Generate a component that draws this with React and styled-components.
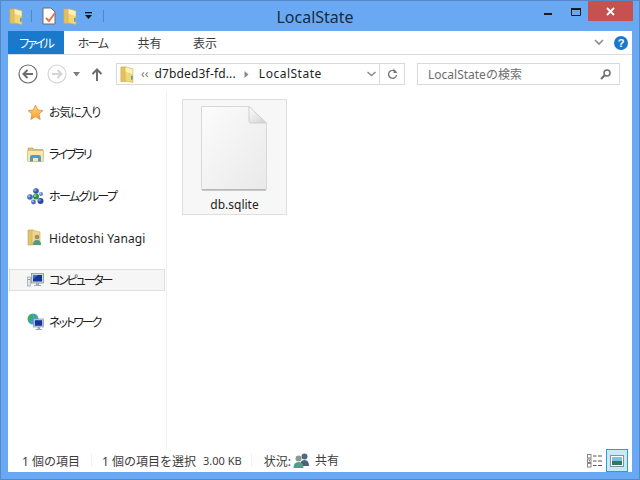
import React from 'react';
import styled, { createGlobalStyle } from 'styled-components';

const Global = createGlobalStyle`
  html, body { margin: 0; padding: 0; width: 640px; height: 480px; overflow: hidden; background: #69a9f4; }
  * { box-sizing: border-box; }
`;
const FONT = `"Noto Sans", "Noto Sans CJK JP", sans-serif`;

const Win = styled.div`
  width: 640px; height: 480px; display: flex; flex-direction: column;
  background: #69a9f4; border: 1px solid #5588c4; font-family: ${FONT}; color: #1e1e1e;
  font-size: 12px; position: relative;
`;
const TitleBar = styled.div`
  height: 30px; display: grid; grid-template-columns: 1fr auto 1fr; align-items: start; flex: none;
`;
const Qat = styled.div`
  display: flex; align-items: center; height: 30px; padding: 0 0 0 8px;
`;
const QatSep = styled.span`
  width: 1px; height: 12px; background: #4f86c4; margin: ${p => p.$m};
`;
const Title = styled.div`
  font-size: 16px; line-height: 30px; color: #1d2a3c; margin-top: 1px; padding-right: 10px;
`;
const Controls = styled.div`
  display: flex; justify-content: flex-end; align-items: flex-start; padding-right: 6px;
`;
const CtlBtn = styled.div`
  width: ${p => p.$w}px; height: 20px; display: flex; align-items: center; justify-content: center;
  background: ${p => p.$bg || 'transparent'};
`;
const Body = styled.div`
  flex: 1; margin: 0 7px 7px; background: #fff; display: flex; flex-direction: column; min-height: 0;
`;
const Tabs = styled.div`
  height: 24px; flex: none; display: flex; align-items: stretch; border-bottom: 1px solid #dadbdc; position: relative;
`;
const Tab = styled.div`
  width: ${p => p.$w}px; display: flex; align-items: center; justify-content: center; font-size: 12px;
  font-feature-settings: "palt"; letter-spacing: ${p => p.$ls || 0}px;
  height: 23px; background: ${p => p.$active ? '#1979ca' : 'transparent'}; color: ${p => p.$active ? '#fff' : '#3b3b3b'};
`;
const TabRight = styled.div`
  margin-left: auto; display: flex; align-items: center; gap: 10px; padding-right: 4px; height: 23px;
`;
const NavRow = styled.div`
  height: 37px; flex: none; display: flex; align-items: flex-start; padding-top: 8px;
`;
const NavIcons = styled.div`
  width: 108px; flex: none; height: 22px; display: flex; align-items: center; padding-left: 10px;
`;
const Box = styled.div`
  height: 22px; border: 1px solid #d9d9d9; display: flex; align-items: center; background: #fff;
`;
const AddressBox = styled(Box)`
  width: 289px; flex: none; padding-left: 3px;
`;
const Crumb = styled.span`
  font-size: ${p => p.$fs || 12}px; color: ${p => p.$c || '#1e1e1e'}; line-height: 20px; white-space: nowrap;
  letter-spacing: ${p => p.$ls || 0}px; margin-left: ${p => p.$ml || 0}px;
`;
const AddrEnd = styled.div`
  margin-left: auto; display: flex; align-items: center; height: 20px;
`;
const Refresh = styled.div`
  width: 25px; height: 20px; border-left: 1px solid #d9d9d9; display: flex; align-items: center; justify-content: center;
`;
const SearchBox = styled(Box)`
  width: 203px; flex: none; margin-left: 12px; padding: 0 8px 0 10px; justify-content: space-between;
  color: #6d6d6d; font-size: 12px;
`;
const Main = styled.div`
  flex: 1; display: flex; min-height: 0;
`;
const Side = styled.div`
  width: 159px; flex: none; border-right: 1px solid #f0f0f0; padding: 9px 0 0 1px; display: flex; flex-direction: column;
`;
const SideItem = styled.div`
  height: 22px; width: 156px; margin-bottom: 20px; display: flex; align-items: center; padding-left: 18px;
  font-size: 12px; white-space: nowrap; color: #1e1e1e; font-feature-settings: "palt";
  ${p => p.$sel && 'background:#f6f6f6; outline: 1px solid #dedede; outline-offset: -1px;'}
`;
const IconSlot = styled.span`
  width: 22px; flex: none; display: flex; align-items: center;
`;
const SideLabel = styled.span`
  letter-spacing: ${p => p.$ls || 0}px;
`;
const Content = styled.div`
  flex: 1; padding: 7px 0 0 15px;
`;
const FileTile = styled.div`
  width: 105px; height: 116px; background: #f7f7f7; border: 1px solid #dedede; display: flex; flex-direction: column; align-items: center;
`;
const FileName = styled.div`
  font-size: 12px; line-height: 16px; margin-top: 6px; color: #1e1e1e; font-family: ${FONT};
`;
const Status = styled.div`
  height: 23px; flex: none; display: flex; align-items: center; padding-left: 14px; font-size: 12px; color: #3c3c3c; white-space: nowrap;
`;
const StSep = styled.span`
  width: 1px; height: 13px; background: #f0f0f0; margin: ${p => p.$m};
`;
const StatusRight = styled.div`
  margin-left: auto; display: flex; align-items: center; height: 23px; padding-right: 4px;
`;
const ViewBtn = styled.div`
  width: 22px; height: 23px; display: flex; align-items: center; justify-content: center;
  ${p => p.$on && 'background:#cbe8f6; border: 1px solid #26a0da;'}
`;
const Gap = styled.span`
  width: ${p => p.$w}px; flex: none;
`;

const Folder = ({ w = 14, h = 17 }) => (
  <svg width={w} height={h} viewBox="0 0 14 18">
    <path d="M.5 1h5.500v15.500H.5z" fill="#e4c15e" stroke="#c9a64a" strokeWidth=".6" />
    <path d="M5 .7l8.300 2.300v14.500L5 15.800z" fill="#f3d777" stroke="#cfae55" strokeWidth=".6" />
    <path d="M5.500 1.300L12.800 3.400v5L5.500 6z" fill="#fcf0bd" />
    <rect x="11.300" y="10.500" width="1.700" height="4" fill="#3f9fd8" />
  </svg>
);
const Star = () => (
  <svg width="17" height="17" viewBox="0 0 17 17">
    <defs><linearGradient id="st" x1="0" y1="0" x2="0" y2="1"><stop offset="0" stopColor="#ffdf78" /><stop offset="1" stopColor="#f59c30" /></linearGradient></defs>
    <path d="M8.500 1l2.200 5 5.300.5-4 3.500 1.200 5.400-4.700-2.800-4.700 2.800 1.200-5.400-4-3.500 5.300-.5z" fill="url(#st)" stroke="#e08a3c" strokeWidth=".8" />
  </svg>
);
const Lib = () => (
  <svg width="17" height="15" viewBox="0 0 17 15">
    <path d="M1 1h5l1 1.500h9v2H1z" fill="#d9c27a" stroke="#a9a05a" strokeWidth=".6" />
    <rect x=".5" y="3.500" width="16" height="11" rx="1" fill="#f8e7a8" stroke="#c9b26a" strokeWidth=".7" />
    <path d="M3 14.500V10q0-2 2-2h7q2 0 2 2v4.500h-3V11H6v3.500z" fill="#4a9ccf" />
  </svg>
);
const Ball = ({ cx, cy, r, c, h }) => (
  <>
    <circle cx={cx} cy={cy} r={r} fill={c} />
    <circle cx={cx - r * 0.3} cy={cy - r * 0.3} r={r * 0.45} fill={h} />
  </>
);
const Group = () => (
  <svg width="17" height="17" viewBox="0 0 17 17">
    <Ball cx={9} cy={3} r={2.800} c="#3558ad" h="#7f9be0" />
    <Ball cx={3} cy={9} r={2.800} c="#3f66bb" h="#90acea" />
    <Ball cx={14} cy={6} r={2} c="#5f84d0" h="#b5c8f0" />
    <Ball cx={9} cy={8.500} r={3} c="#2a9140" h="#7fd08a" />
    <Ball cx={13.500} cy={13} r={3} c="#2a48a0" h="#7590d8" />
    <Ball cx={6.500} cy={14} r={2.400} c="#4a6fc4" h="#a0b8ec" />
  </svg>
);
const UserFolder = () => (
  <svg width="15" height="18" viewBox="0 0 15 18">
    <path d="M1 1h5v15H1z" fill="#e3c46c" stroke="#bfa050" strokeWidth=".6" />
    <path d="M5 1l8 2v13l-8-1z" fill="#ecd68c" stroke="#c7ac5c" strokeWidth=".6" />
    <circle cx="10" cy="8" r="2.300" fill="#a58a70" />
    <path d="M6 16q0-5 4-5t4 5z" fill="#4f9a80" />
  </svg>
);
const Computer = () => (
  <svg width="17" height="16" viewBox="0 0 17 16">
    <rect x=".5" y="5" width="3" height="9" fill="#e4e7ea" stroke="#8b949c" strokeWidth=".6" />
    <rect x="1.200" y="7" width="1.600" height="1" fill="#3fb04a" />
    <rect x="4.500" y="1.500" width="12" height="9.500" fill="#cfd6dc" stroke="#7d8a96" strokeWidth=".7" />
    <rect x="6" y="3" width="9" height="6.500" fill="#16379a" />
    <path d="M6 3h5L6 7z" fill="#3d6fd0" />
    <path d="M9 11h3v2h2v1H7v-1h2z" fill="#a0a8b0" />
  </svg>
);
const Network = () => (
  <svg width="17" height="18" viewBox="0 0 17 18">
    <circle cx="6" cy="6" r="5.500" fill="#3f9fdc" />
    <path d="M2 3q3-2 4 0t-1 3-2 3-2-2zM7 1q3 1 3 3l-2 1z" fill="#3fae4e" />
    <rect x="6.500" y="6" width="10" height="8" fill="#cfd6dc" stroke="#7d8a96" strokeWidth=".6" />
    <rect x="7.800" y="7.200" width="7.400" height="5.600" fill="#16379a" />
    <path d="M10.500 14h2.500v2h2v1H8.500v-1h2z" fill="#a0a8b0" />
  </svg>
);
const People = () => (
  <svg width="17" height="16" viewBox="0 0 17 16">
    <circle cx="11.500" cy="3.600" r="3" fill="#4f6a80" />
    <path d="M7 13q0-6 4.500-6t4.500 6z" fill="#4a6378" />
    <circle cx="5.500" cy="5.600" r="3" fill="#8a9a92" />
    <path d="M.5 15q0-6 5-6t5 6z" fill="#4f9f8a" />
  </svg>
);
const NavCircle = ({ dir, c, sw }) => (
  <svg width="20" height="20" viewBox="0 0 20 20" fill="none" stroke={c}>
    <circle cx="10" cy="10" r="9" strokeWidth={sw} />
    <path d={dir === 'l' ? 'M15 10H6M9.500 6L5.500 10l4 4' : 'M5 10h9M10.500 6l4 4-4 4'} strokeWidth="2" />
  </svg>
);

export default function App() {
  return (
    <>
      <Global />
      <Win>
        <TitleBar>
          <Qat>
            <Folder />
            <QatSep $m="0 0 0 8px" />
            <Gap $w={10} />
            <svg width="16" height="18" viewBox="0 0 16 18">
              <path d="M1 1h8l4 4v12H1z" fill="#fff" stroke="#6b6b6b" />
              <path d="M4 11l3 3 6-8" fill="none" stroke="#e8704a" strokeWidth="2" />
            </svg>
            <Gap $w={5} />
            <Folder />
            <Gap $w={7} />
            <svg width="9" height="8" viewBox="0 0 9 8"><rect x="1" y="0" width="7" height="1.300" fill="#111" /><path d="M1 3h7L4.500 7z" fill="#111" /></svg>
            <QatSep $m="0 0 0 10px" />
          </Qat>
          <Title>LocalState</Title>
          <Controls>
            <CtlBtn $w={26}>
              <svg width="10" height="2" viewBox="0 0 10 2" style={{ marginTop: 6, marginRight: 3 }}><rect width="8" height="2" fill="#1c1c1c" /></svg>
            </CtlBtn>
            <CtlBtn $w={25}>
              <svg width="10" height="8" viewBox="0 0 10 8" style={{ marginTop: 1 }}><path d="M.5.500h9v7h-9z" fill="none" stroke="#1c1c1c" /><rect width="10" height="2" fill="#1c1c1c" /></svg>
            </CtlBtn>
            <CtlBtn $w={45} $bg="#c75050">
              <svg width="9" height="9" viewBox="0 0 9 9"><path d="M1 1l7 7M8 1l-7 7" stroke="#fff" strokeWidth="1.800" /></svg>
            </CtlBtn>
          </Controls>
        </TitleBar>
        <Body>
          <Tabs>
            <Tab $active $w={56} $ls={-2}>ファイル</Tab>
            <Tab $w={57} $ls={-1.6}>ホーム</Tab>
            <Tab $w={57}>共有</Tab>
            <Tab $w={54}>表示</Tab>
            <TabRight>
              <svg width="10" height="7" viewBox="0 0 10 7"><path d="M1 1l4 4 4-4" fill="none" stroke="#8a8a8a" strokeWidth="1.600" /></svg>
              <svg width="14" height="14" viewBox="0 0 14 14"><circle cx="7" cy="7" r="7" fill="#1979ca" /><text x="7" y="11" fontSize="11" fontWeight="700" textAnchor="middle" fill="#fff" fontFamily="Liberation Sans">?</text></svg>
            </TabRight>
          </Tabs>
          <NavRow>
            <NavIcons>
              <NavCircle dir="l" c="#6d6d6d" sw="1.200" />
              <Gap $w={9} />
              <NavCircle dir="r" c="#d4d4d4" sw="1.200" />
              <Gap $w={6} />
              <svg width="8" height="5" viewBox="0 0 8 5"><path d="M0 0h7L3.500 4.500z" fill="#7d7d7d" /></svg>
              <Gap $w={10} />
              <svg width="12" height="13" viewBox="0 0 12 13"><path d="M6 1v12M1.500 6L6 1.500 10.500 6" fill="none" stroke="#6d6d6d" strokeWidth="2" /></svg>
            </NavIcons>
            <AddressBox>
              <Folder w={14} h={17} />
              <Crumb $c="#777" $ml={7}>‹‹</Crumb>
              <Crumb $ml={6} $ls={0.16}>d7bded3f-fd...</Crumb>
              <svg width="5" height="7" viewBox="0 0 5 7" style={{ margin: '0 10px 0 8px' }}><path d="M.5 0l4 3.500-4 3.500z" fill="#8a8a8a" /></svg>
              <Crumb $ls={0.5}>LocalState</Crumb>
              <AddrEnd>
                <svg width="9" height="6" viewBox="0 0 9 6" style={{ marginRight: 3 }}><path d="M.5 1l4 3.500 4-3.500" fill="none" stroke="#8a8a8a" strokeWidth="1.500" /></svg>
                <Refresh>
                  <svg width="11" height="12" viewBox="0 0 11 12"><path d="M8.800 4A4 4 0 1 0 9.500 7" fill="none" stroke="#7a7a7a" strokeWidth="1.400" /><path d="M6.500 .5v4.500h4z" fill="#7a7a7a" /></svg>
                </Refresh>
              </AddrEnd>
            </AddressBox>
            <SearchBox>
              <span>LocalStateの検索</span>
              <svg width="11" height="11" viewBox="0 0 11 11"><circle cx="7" cy="4" r="3" fill="none" stroke="#6d6d6d" strokeWidth="1.500" /><path d="M4.500 6.500L1 10" stroke="#6d6d6d" strokeWidth="2.200" /></svg>
            </SearchBox>
          </NavRow>
          <Main>
            <Side>
              <SideItem><IconSlot><Star /></IconSlot><SideLabel $ls={-1.2}>お気に入り</SideLabel></SideItem>
              <SideItem><IconSlot><Lib /></IconSlot><SideLabel $ls={-2}>ライブラリ</SideLabel></SideItem>
              <SideItem><IconSlot><Group /></IconSlot><SideLabel $ls={-1.6}>ホームグループ</SideLabel></SideItem>
              <SideItem><IconSlot><UserFolder /></IconSlot><SideLabel $ls={0.12}>Hidetoshi Yanagi</SideLabel></SideItem>
              <SideItem $sel><IconSlot><Computer /></IconSlot><SideLabel $ls={-2.2}>コンピューター</SideLabel></SideItem>
              <SideItem><IconSlot><Network /></IconSlot><SideLabel $ls={-2}>ネットワーク</SideLabel></SideItem>
            </Side>
            <Content>
              <FileTile>
                <svg width="67" height="85" viewBox="1 0 67 85" style={{ marginTop: 6 }}>
                  <defs>
                    <linearGradient id="pg" x1="0" y1="0" x2="1" y2="1"><stop offset="0" stopColor="#fcfcfc" /><stop offset="1" stopColor="#e9e9e9" /></linearGradient>
                    <linearGradient id="fd" x1="0" y1="0" x2="1" y2="1"><stop offset="0" stopColor="#fff" /><stop offset="1" stopColor="#d0d0d0" /></linearGradient>
                  </defs>
                  <path d="M1.500 .5H49L66.500 18V82.500a2 2 0 0 1-2 2H3.500a2 2 0 0 1-2-2z" fill="url(#pg)" stroke="#d8d8d8" />
                  <path d="M49 .5V15a2 2 0 0 0 2 2H66.500z" fill="url(#fd)" stroke="#cfcfcf" />
                  <path d="M2 83.800H66" stroke="#b8b8b8" strokeWidth="1.500" />
                </svg>
                <FileName>db.sqlite</FileName>
              </FileTile>
            </Content>
          </Main>
          <Status>
            <span>1 個の項目</span>
            <StSep $m="0 10px 0 11px" />
            <span>1 個の項目を選択</span>
            <Crumb $ml={7} $fs={11} $c="#3c3c3c">3.00 KB</Crumb>
            <StSep $m="0 12px 0 9px" />
            <span>状況:</span>
            <Gap $w={2} />
            <People />
            <Crumb $ml={5} $c="#3c3c3c">共有</Crumb>
            <StatusRight>
              <ViewBtn>
                <svg width="16" height="16" viewBox="0 0 16 16">
                  <rect x=".5" y="1.500" width="3.500" height="3.500" fill="#fff" stroke="#888" />
                  <rect x=".5" y="6" width="3.500" height="3.500" fill="#fff" stroke="#888" />
                  <rect x=".5" y="10.500" width="3.500" height="3.500" fill="#fff" stroke="#888" />
                  <rect x="1.700" y="7.200" width="1.200" height="1.200" fill="#c33" />
                  <path d="M6 3h3.500M11 3h4M6 8h3.500M11 8h4M6 12.500h3.500M11 12.500h4" stroke="#555" />
                </svg>
              </ViewBtn>
              <ViewBtn $on>
                <svg width="14" height="12" viewBox="0 0 14 12">
                  <rect x=".5" y=".5" width="13" height="11" fill="#fff" stroke="#8a9096" />
                  <rect x="2" y="2" width="10" height="4" fill="#7cc0e8" />
                  <rect x="2" y="6" width="10" height="4" fill="#2f7a5a" />
                </svg>
              </ViewBtn>
            </StatusRight>
          </Status>
        </Body>
      </Win>
    </>
  );
}
